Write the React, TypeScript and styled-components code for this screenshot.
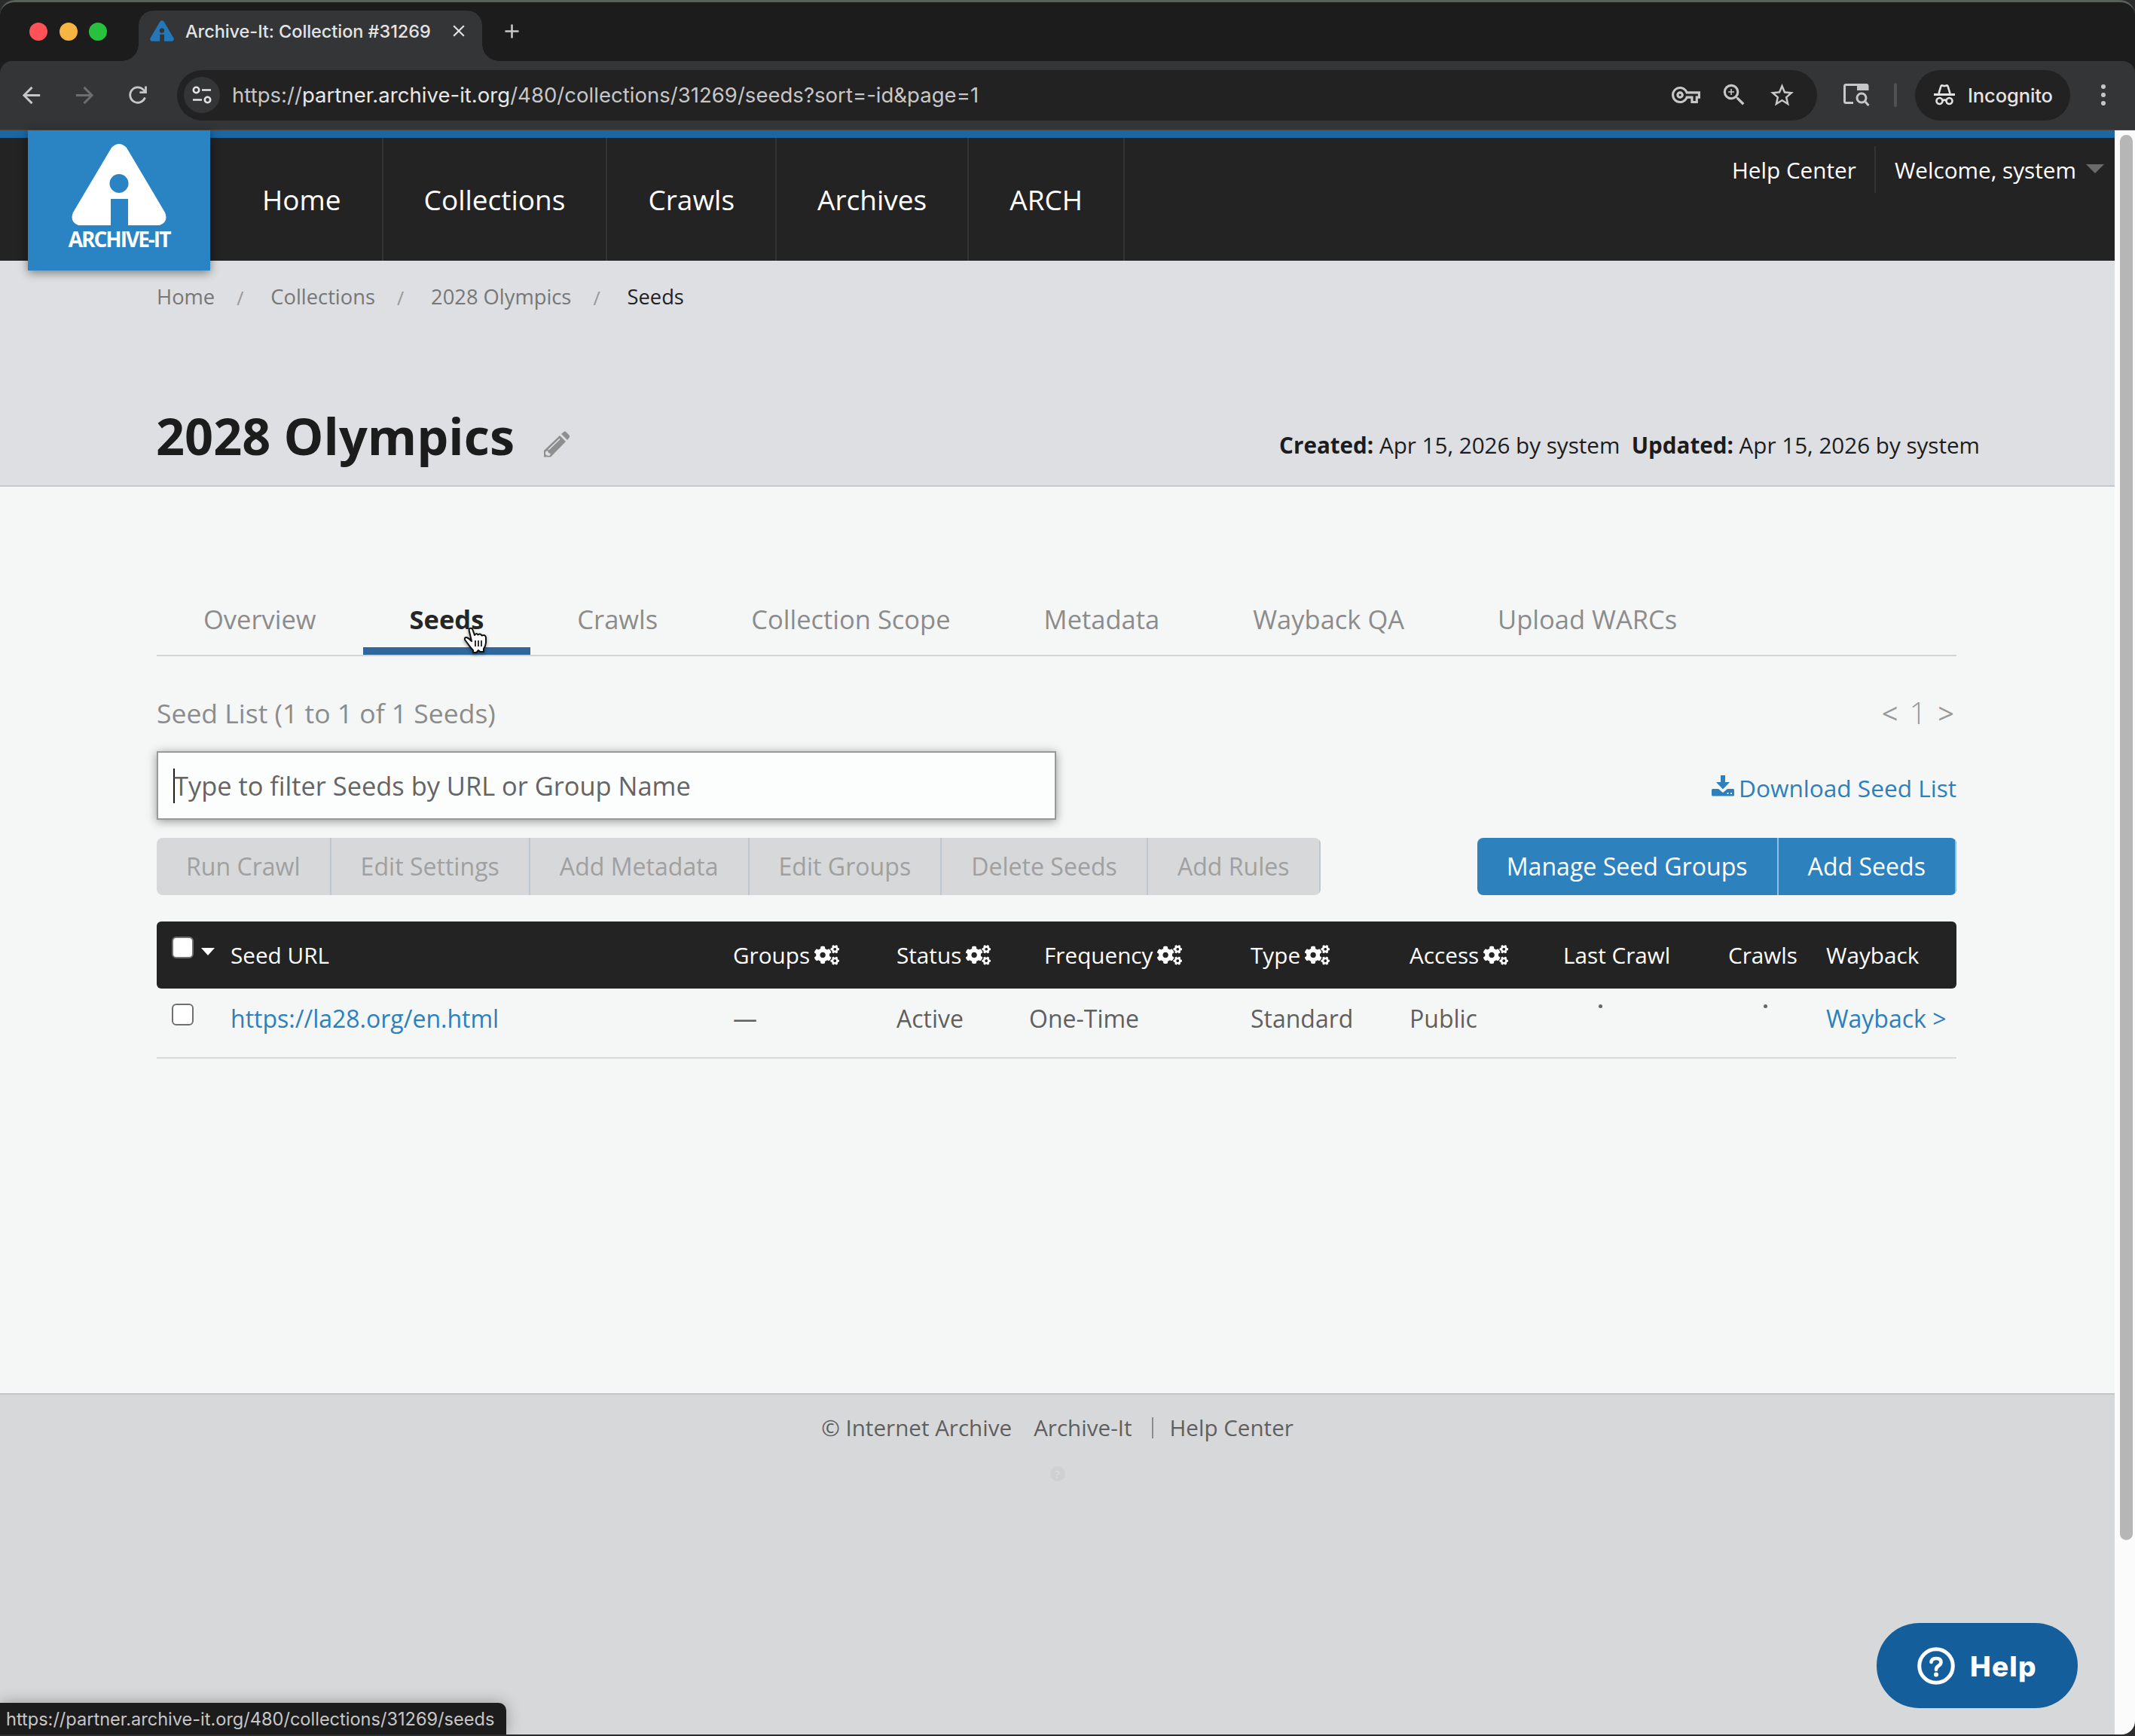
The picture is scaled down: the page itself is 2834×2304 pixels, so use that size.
import type { ReactNode } from 'react';
import styled, { createGlobalStyle } from 'styled-components';
import { FaCogs } from 'react-icons/fa';
import { MdArrowBack, MdArrowForward, MdClose, MdAdd, MdOutlineVpnKey, MdZoomIn, MdStarBorder } from 'react-icons/md';

const navItems = ['Home', 'Collections', 'Crawls', 'Archives', 'ARCH'];
const crumbs = ['Home', 'Collections', '2028 Olympics', 'Seeds'];
const tabs = ['Overview', 'Seeds', 'Crawls', 'Collection Scope', 'Metadata', 'Wayback QA', 'Upload WARCs'];
const bulkActions = ['Run Crawl', 'Edit Settings', 'Add Metadata', 'Edit Groups', 'Delete Seeds', 'Add Rules'];
const seedActions = ['Manage Seed Groups', 'Add Seeds'];

interface Column {
  label: string;
  gears?: boolean;
  indent?: number;
}

const columns: Column[] = [
  { label: 'Seed URL' },
  { label: 'Groups', gears: true },
  { label: 'Status', gears: true },
  { label: 'Frequency', gears: true, indent: 20 },
  { label: 'Type', gears: true },
  { label: 'Access', gears: true },
  { label: 'Last Crawl' },
  { label: 'Crawls' },
  { label: 'Wayback' },
];

const LogoMark = ({ color, width, height }: { color: string; width: number; height: number }) => (
  <svg width={width} height={height} viewBox="0 0 126 108">
    <path
      fill={color}
      fillRule="evenodd"
      d="M53 5Q63-5 73 5L124 91Q129 103 117 108H75V73H52V108H9Q-3 103 2 91ZM63 40A12.500 12.500 0 1 0 63 65A12.500 12.500 0 1 0 63 40Z"
    />
  </svg>
);

const ReloadIcon = () => (
  <svg width="26" height="26" viewBox="0 0 26 26" fill="none" stroke="#c7c7c7" strokeWidth="2.800">
    <path d="M22.500 16.500A10.200 10.200 0 1 1 20.600 6.300L23 9" />
    <path d="M23.500 1.500V9.600H15.400" />
  </svg>
);

const TuneIcon = () => (
  <svg width="26" height="24" viewBox="0 0 26 24" fill="none" stroke="#e3e3e3" strokeWidth="2.600">
    <circle cx="5.500" cy="5.500" r="3.700" />
    <path d="M13 5.500H25M1 18.500H13" />
    <circle cx="20.500" cy="18.500" r="3.700" />
  </svg>
);

const PanelSearchIcon = () => (
  <svg width="36" height="32" viewBox="0 0 36 32" fill="none" stroke="#c7c7c7" strokeWidth="3">
    <path d="M14 26.500H4.500Q2.500 26.500 2.500 24.500V4.500Q2.500 2.500 4.500 2.500H31.500Q33 2.500 33 4.500V10" />
    <path d="M19 2H34V10H19Z" fill="#c7c7c7" stroke="none" />
    <circle cx="25" cy="20" r="6" />
    <path d="M29.500 24.500L34.500 30" />
  </svg>
);

const IncognitoIcon = () => (
  <svg width="30" height="30" viewBox="0 0 30 30" fill="none" stroke="#e3e3e3" strokeWidth="2.600">
    <path d="M7.500 13L10.500 3.200Q11 2 12.300 2.400L15 3.200L17.700 2.400Q19 2 19.500 3.200L22.500 13" />
    <path d="M1 14.500H29" strokeWidth="3" />
    <circle cx="8.500" cy="23" r="4" />
    <circle cx="21.500" cy="23" r="4" />
    <path d="M12.500 22.500Q15 20.800 17.500 22.500" />
  </svg>
);

const PencilIcon = () => (
  <svg width="36" height="36" viewBox="0 0 36 36">
    <path fill="#8f8f8f" d="M1 26L22 6L30 14L10 34.500H1ZM24 4L27.500 1Q29 0 30.500 1.500L34.500 5.500Q36 7 34.500 9L32 12Z" />
    <path d="M7 25L22 10.500" stroke="#dddfe2" strokeWidth="1.600" />
    <path fill="#dddfe2" d="M3 27.500L6 26L7 29L10 30L8.500 33L5 32.500L3 31Z" />
  </svg>
);

const DownloadIcon = () => (
  <svg width="30" height="28" viewBox="0 0 30 28" fill="#2b80bd">
    <path d="M12 0H18V9H24L15 18.500L6 9H12Z" />
    <path fillRule="evenodd" d="M1.500 18H9L15 23L21 18H28.500Q30 18 30 19.500V26Q30 27.500 28.500 27.500H1.500Q0 27.500 0 26V19.500Q0 18 1.500 18ZM20.500 23V25H22.500V23ZM25 23V25H27V23Z" />
  </svg>
);

const HelpIcon = () => (
  <svg width="50" height="50" viewBox="0 0 50 50" fill="none" stroke="#fff" strokeLinecap="round">
    <circle cx="25" cy="25" r="22.300" strokeWidth="5" />
    <path d="M18.500 20Q19 15 25 15Q31.500 15 31.500 20Q31.500 23 28 25Q25 27 25 30" strokeWidth="4.600" />
    <circle cx="25" cy="36.500" r="3" fill="#fff" stroke="none" />
  </svg>
);

const HandCursor = () => (
  <svg width="34" height="36" viewBox="0 0 34 36">
    <path
      d="M7.500 4Q8.500 .800 11 2Q12 2.500 12.500 4L15 11Q17 7.500 19.500 10.500Q22.500 8 24.500 11.500Q29 9.500 30 14V21Q29.500 26 27 29V33H22.500L20 31L17.500 34H13V31Q9 27 6.500 23L2 17Q1.500 13.500 4.500 14Q7.500 15 11 19Z"
      fill="#fff"
      stroke="#111"
      strokeWidth="2"
      strokeLinejoin="round"
    />
    <path d="M16 18V26M20 18V26M24 18V26" stroke="#111" strokeWidth="1.700" />
  </svg>
);

const HeadCell = ({ column }: { column: Column }) => (
  <Cell $indent={column.indent}>
    {column.label}
    {column.gears && <FaCogs size={33} />}
  </Cell>
);

const Browser = ({ children }: { children: ReactNode }) => (
  <Window>
    <TabStrip>
      <Lights>
        <Light $color="#ff5257" />
        <Light $color="#f6b443" />
        <Light $color="#27c13e" />
      </Lights>
      <BrowserTab>
        <LogoMark color="#2477b8" width={32} height={28} />
        <TabTitle>Archive-It: Collection #31269</TabTitle>
        <MdClose size={26} />
      </BrowserTab>
      <NewTab>
        <MdAdd size={31} />
      </NewTab>
    </TabStrip>
    <Toolbar>
      <NavButtons>
        <MdArrowBack size={35} />
        <MdArrowForward size={35} color="#6d6e70" />
        <ReloadIcon />
      </NavButtons>
      <Omnibox>
        <SiteInfo>
          <TuneIcon />
        </SiteInfo>
        <Url>
          https://<b>partner.archive-it.org</b>/480/collections/31269/seeds?sort=-id&amp;page=1
        </Url>
        <OmniIcons>
          <MdOutlineVpnKey size={38} />
          <MdZoomIn size={38} />
          <MdStarBorder size={37} />
        </OmniIcons>
      </Omnibox>
      <PanelButton>
        <PanelSearchIcon />
      </PanelButton>
      <ToolbarDivider />
      <Incognito>
        <IncognitoIcon />
        Incognito
      </Incognito>
      <Dots>
        <i />
        <i />
        <i />
      </Dots>
    </Toolbar>
    {children}
  </Window>
);

const App = () => (
  <>
    <GlobalStyle />
    <Browser>
      <Viewport>
        <Page>
          <SiteHeader>
            <Logo>
              <LogoMark color="#fff" width={126} height={108} />
              <LogoText>ARCHIVE-IT</LogoText>
            </Logo>
            {navItems.map((item) => (
              <NavItem key={item}>{item}</NavItem>
            ))}
            <UserMenu>
              <UserLink>Help Center</UserLink>
              <UserLink>
                Welcome, system
                <Caret />
              </UserLink>
            </UserMenu>
          </SiteHeader>
          <TitleBand>
            <Breadcrumbs>
              {crumbs.map((crumb) => (
                <Crumb key={crumb}>{crumb}</Crumb>
              ))}
            </Breadcrumbs>
            <TitleRow>
              <Title>2028 Olympics</Title>
              <PencilIcon />
              <Dates>
                <b>Created:</b> Apr 15, 2026 by system&nbsp; <b>Updated:</b> Apr 15, 2026 by system
              </Dates>
            </TitleRow>
          </TitleBand>
          <Main>
            <Tabs>
              {tabs.map((tab) => (
                <Tab key={tab} $active={tab === 'Seeds'}>
                  {tab}
                  {tab === 'Seeds' && (
                    <Cursor>
                      <HandCursor />
                    </Cursor>
                  )}
                </Tab>
              ))}
            </Tabs>
            <ListHead>
              <span>Seed List (1 to 1 of 1 Seeds)</span>
              <Pager>
                <span>&lt;</span>
                <PageNumber>1</PageNumber>
                <span>&gt;</span>
              </Pager>
            </ListHead>
            <FilterRow>
              <FilterBox>
                <TextCaret />
                Type to filter Seeds by URL or Group Name
              </FilterBox>
              <Download>
                <DownloadIcon />
                Download Seed List
              </Download>
            </FilterRow>
            <ActionRow>
              <ButtonGroup>
                {bulkActions.map((action) => (
                  <Button key={action}>{action}</Button>
                ))}
              </ButtonGroup>
              <ButtonGroup>
                {seedActions.map((action) => (
                  <Button key={action} $primary>
                    {action}
                  </Button>
                ))}
              </ButtonGroup>
            </ActionRow>
            <HeadRow>
              <SelectCell>
                <Checkbox />
                <SelectCaret />
              </SelectCell>
              {columns.map((column) => (
                <HeadCell key={column.label} column={column} />
              ))}
            </HeadRow>
            <BodyRow>
              <SelectCell>
                <Checkbox />
              </SelectCell>
              <Cell $link>https://la28.org/en.html</Cell>
              <Cell>—</Cell>
              <Cell>Active</Cell>
              <Cell>One-Time</Cell>
              <Cell>Standard</Cell>
              <Cell>Public</Cell>
              <Cell>
                <Dot />
              </Cell>
              <Cell>
                <Dot />
              </Cell>
              <Cell $link>Wayback &gt;</Cell>
            </BodyRow>
          </Main>
          <Footer>
            <FooterLinks>
              <span>© Internet Archive</span>
              <span>Archive-It</span>
              <FooterDivider />
              <span>Help Center</span>
            </FooterLinks>
            <FooterBadge>?</FooterBadge>
          </Footer>
        </Page>
        <ScrollTrack>
          <ScrollThumb />
        </ScrollTrack>
      </Viewport>
      <HelpButton>
        <HelpIcon />
        Help
      </HelpButton>
      <StatusBar>https://partner.archive-it.org/480/collections/31269/seeds</StatusBar>
    </Browser>
  </>
);

export default App;

const GlobalStyle = createGlobalStyle`
  * {
    box-sizing: border-box;
  }

  body {
    margin: 0;
    background: #2b2b2b;
    font-family: 'Open Sans', sans-serif;
    color: #5b5b5b;
  }

  svg {
    display: block;
    flex: none;
  }
`;

const Window = styled.div`
  position: relative;
  display: flex;
  flex-direction: column;
  width: 2834px;
  height: 2302px;
  margin-bottom: 2px;
  border-top: 3px solid #59605a;
  border-radius: 20px 20px 18px 0;
  background: #1c1c1d;
  overflow: hidden;
  white-space: nowrap;
`;

const TabStrip = styled.div`
  display: flex;
  height: 78px;
  padding-top: 11px;
  font-family: Inter, sans-serif;
`;

const Lights = styled.div`
  display: flex;
  gap: 15.500px;
  width: 184px;
  padding: 16px 0 0 39px;
`;

const Light = styled.span<{ $color: string }>`
  width: 24px;
  height: 24px;
  border-radius: 50%;
  background: ${({ $color }) => $color};
`;

const BrowserTab = styled.div`
  position: relative;
  display: flex;
  align-items: center;
  width: 456px;
  height: 67px;
  padding: 0 18px 13px 15px;
  border-radius: 20px 20px 0 0;
  background: #343537;
  color: #e3e3e3;

  /* flared feet of the active tab */
  &::before,
  &::after {
    content: '';
    position: absolute;
    bottom: 0;
    width: 22px;
    height: 22px;
  }

  &::before {
    left: -22px;
    background: radial-gradient(circle at 0 0, transparent 21.500px, #343537 22px);
  }

  &::after {
    right: -22px;
    background: radial-gradient(circle at 100% 0, transparent 21.500px, #343537 22px);
  }
`;

const TabTitle = styled.span`
  flex: 1;
  margin-left: 15px;
  font-size: 23.500px;
  font-weight: 500;
  letter-spacing: -0.06px;
`;

const NewTab = styled.div`
  padding: 12px 0 0 24px;
  color: #c7c7c7;
`;

const Toolbar = styled.div`
  display: flex;
  align-items: center;
  height: 92px;
  padding-bottom: 1px;
  border-bottom: 1px solid #46474a;
  border-radius: 16px 16px 0 0;
  background: #343537;
  color: #c7c7c7;
  font-family: Inter, sans-serif;
`;

const NavButtons = styled.div`
  display: flex;
  align-items: center;
  gap: 35.500px;
  width: 235px;
  padding-left: 24px;

  svg:last-child {
    margin-left: 5px;
  }
`;

const Omnibox = styled.div`
  display: flex;
  align-items: center;
  width: 2177px;
  height: 67px;
  padding: 0 28px 0 9px;
  border-radius: 34px;
  background: #222223;
`;

const SiteInfo = styled.span`
  display: flex;
  align-items: center;
  justify-content: center;
  width: 48px;
  height: 48px;
  border-radius: 50%;
  background: #343537;
`;

const Url = styled.span`
  flex: 1;
  margin-left: 16px;
  font-size: 27.500px;
  letter-spacing: 0.03px;

  b {
    color: #e8e8e8;
    font-weight: 400;
  }
`;

const OmniIcons = styled.span`
  display: flex;
  align-items: center;
  gap: 26px;
`;

const PanelButton = styled.span`
  margin-left: 34px;
`;

const ToolbarDivider = styled.span`
  width: 4px;
  height: 32px;
  margin: 0 24px 0 32px;
  border-radius: 2px;
  background: #505153;
`;

const Incognito = styled.div`
  display: flex;
  align-items: center;
  gap: 16px;
  width: 206px;
  height: 67px;
  padding-left: 24px;
  border-radius: 34px;
  background: #222223;
  color: #e3e3e3;
  font-size: 25.500px;
  font-weight: 500;
  letter-spacing: -0.1px;
`;

const Dots = styled.div`
  display: flex;
  flex-direction: column;
  gap: 5px;
  margin-left: 41px;

  i {
    width: 6px;
    height: 6px;
    border-radius: 50%;
    background: #c7c7c7;
  }
`;

const Viewport = styled.div`
  display: flex;
  flex: 1;
  min-height: 0;
`;

const Page = styled.div`
  display: flex;
  flex-direction: column;
  width: 2807px;
  background: #f5f7f7;
`;

const SiteHeader = styled.header`
  display: flex;
  height: 173px;
  padding-left: 37px;
  border-top: 10px solid #1e669f;
  background: #232324;
  color: #fff;
`;

const Logo = styled.div`
  z-index: 1;
  display: flex;
  flex-direction: column;
  align-items: center;
  width: 242px;
  height: 186px;
  margin: -10px 15px 0 0;
  padding-top: 18px;
  background: #2a84c4;
  box-shadow: 0 3px 12px rgba(0, 0, 0, 0.45);
`;

const LogoText = styled.span`
  margin-top: 2px;
  font-size: 28px;
  font-weight: 700;
  line-height: 32px;
  letter-spacing: -2px;
`;

const NavItem = styled.a`
  padding: 0 54px;
  border-right: 2px solid #333335;
  font-size: 37px;
  line-height: 163px;
`;

const UserMenu = styled.div`
  display: flex;
  align-items: flex-start;
  margin: 11px 14px 0 auto;
`;

const UserLink = styled.a`
  display: flex;
  align-items: center;
  height: 62px;
  padding-left: 25px;
  font-size: 29.700px;

  &:first-child {
    padding-right: 24px;
    border-right: 2px solid #333335;
  }
`;

const Caret = styled.span`
  margin: -3px 0 0 13px;
  border: 12px solid transparent;
  border-top-color: #6b6b6b;
  border-bottom: 0;
`;

const TitleBand = styled.section`
  height: 300px;
  padding: 26px 179px 0 208px;
  border-bottom: 2px solid #c3c9ce;
  background: #dddfe2;
`;

const Breadcrumbs = styled.nav`
  display: flex;
  font-size: 27.300px;
  line-height: 44px;
`;

const Crumb = styled.a`
  color: #777;

  & + &::before {
    content: '/';
    margin: 0 36px 0 29px;
    color: #999;
    font-size: 25px;
    vertical-align: -1px;
  }

  &:last-child {
    color: #222;
  }
`;

const TitleRow = styled.div`
  display: flex;
  align-items: center;
  height: 100px;
  margin-top: 115px;
`;

const Title = styled.h1`
  margin: 0 38px 0 -1px;
  padding-bottom: 8px;
  color: #1c1c1d;
  font-size: 66.600px;
  font-weight: 700;

  & + svg {
    margin-top: 15px;
  }
`;

const Dates = styled.p`
  margin: 16px 0 0 auto;
  color: #1c1c1d;
  font-size: 29.600px;
`;

const Main = styled.main`
  height: 1203px;
  padding: 133px 210px 0 208px;
`;

const Tabs = styled.nav`
  display: flex;
  height: 92px;
  border-bottom: 2px solid #d3d5d5;
`;

const Tab = styled.a<{ $active: boolean }>`
  position: relative;
  padding: 0 62px;
  border-bottom: 10px solid ${({ $active }) => ($active ? '#2f669c' : 'transparent')};
  color: ${({ $active }) => ($active ? '#262626' : '#8c8c8c')};
  font-size: 34.500px;
  font-weight: ${({ $active }) => ($active ? 700 : 400)};
  line-height: 85px;
`;

const Cursor = styled.span`
  position: absolute;
  top: 53px;
  left: 133px;
  line-height: 0;
  filter: drop-shadow(0 2px 2px rgba(0, 0, 0, 0.4));
`;

const ListHead = styled.div`
  display: flex;
  align-items: center;
  justify-content: space-between;
  height: 92px;
  margin-top: 29px;
  padding-bottom: 1px;
  color: #8c8c8c;
  font-size: 35.500px;
`;

const Pager = styled.span`
  display: flex;
  align-items: center;
  gap: 15px;
  padding-right: 3px;
  color: #999;
  font-size: 38px;
`;

const PageNumber = styled.span`
  font-size: 40px;
  font-weight: 300;
`;

const FilterRow = styled.div`
  display: flex;
  align-items: center;
  justify-content: space-between;
  height: 91px;
  margin-top: 5px;
`;

const FilterBox = styled.div`
  display: flex;
  align-items: center;
  width: 1194px;
  height: 91px;
  padding: 0 20px;
  border: 2px solid #999;
  background: #fcfdfd;
  box-shadow: 0 2px 12px rgba(0, 0, 0, 0.4);
  color: #646464;
  font-size: 34.400px;
`;

const TextCaret = styled.span`
  width: 2px;
  height: 46px;
  margin-right: -1px;
  background: #1c1c1d;
`;

const Download = styled.a`
  display: flex;
  align-items: center;
  gap: 6px;
  padding-top: 6px;
  color: #2b80bd;
  font-size: 31.600px;

  svg {
    margin-top: -5px;
  }
`;

const ActionRow = styled.div`
  display: flex;
  justify-content: space-between;
  margin-top: 24px;
`;

const ButtonGroup = styled.div`
  display: flex;
  border-radius: 8px;
  overflow: hidden;
`;

const Button = styled.button<{ $primary?: boolean }>`
  height: 76px;
  padding: 0 39px 1px;
  border: 0;
  border-right: 2px solid ${({ $primary }) => ($primary ? '#8fc2e6' : '#bfc7cf')};
  background: ${({ $primary }) => ($primary ? '#2d82be' : '#d7d8da')};
  color: ${({ $primary }) => ($primary ? '#fff' : '#a0a0a0')};
  font-family: inherit;
  font-size: 32.100px;
`;

const TableRow = styled.div`
  display: grid;
  grid-template-columns: 98px 667px 217px 176px 294px 211px 204px 219px 130px 1fr;
`;

const HeadRow = styled(TableRow)`
  height: 89px;
  margin-top: 35px;
  border-radius: 6px;
  background: #232324;
  color: #fff;
  font-size: 29.700px;
  line-height: 89px;
`;

const BodyRow = styled(TableRow)`
  height: 93px;
  border-bottom: 2px solid #d8dadd;
  color: #5f5f5f;
  font-size: 32px;
  line-height: 79px;
`;

const Cell = styled.div<{ $indent?: number; $link?: boolean }>`
  display: flex;
  align-items: center;
  gap: 6px;
  padding-left: ${({ $indent = 0 }) => $indent}px;
  color: ${({ $link }) => ($link ? '#2b80bd' : 'inherit')};

  ${BodyRow} & {
    align-items: flex-start;
  }
`;

const SelectCell = styled.div`
  display: flex;
  align-items: flex-start;
  gap: 10px;
  padding: 20px 0 0 20px;
`;

const Checkbox = styled.span`
  width: 29px;
  height: 29px;
  border: 2px solid #707070;
  border-radius: 6px;
  background: #fff;
`;

const SelectCaret = styled.span`
  margin-top: 15px;
  border: 9px solid transparent;
  border-top: 10px solid #fff;
  border-bottom: 0;
`;

const Dot = styled.span`
  width: 5px;
  height: 5px;
  margin: 21px 0 0 47px;
  border-radius: 50%;
  background: #666;
`;

const Footer = styled.footer`
  flex: 1;
  border-top: 2px solid #c3c5c7;
  background: #d7d8da;
  color: #5f5f5f;
  font-size: 29.600px;
`;

const FooterLinks = styled.div`
  display: flex;
  align-items: center;
  justify-content: center;
  gap: 29px;
  padding-top: 23px;

  span:last-child {
    margin-left: -8px;
  }
`;

const FooterDivider = styled.i`
  width: 2px;
  height: 28px;
  margin-left: -2px;
  background: #8c8c8c;
`;

const FooterBadge = styled.div`
  width: 20px;
  height: 20px;
  margin: 31px auto 0;
  border-radius: 50%;
  background: #cfd0d1;
  color: #d9dbdd;
  font-size: 15px;
  font-weight: 700;
  line-height: 20px;
  text-align: center;
`;

const ScrollTrack = styled.div`
  width: 27px;
  padding: 6px 3px 0 7px;
  background: #fbfbfb;
`;

const ScrollThumb = styled.div`
  height: 1865px;
  border-radius: 9px;
  background: #b6b6b6;
`;

const HelpButton = styled.button`
  position: absolute;
  right: 76px;
  bottom: 35px;
  display: flex;
  align-items: center;
  gap: 20px;
  width: 267px;
  height: 113px;
  padding: 1px 0 0 54px;
  border: 0;
  border-radius: 57px;
  background: #155e9c;
  color: #fff;
  font-family: Inter, sans-serif;
  font-size: 37px;
  font-weight: 800;
  letter-spacing: 1.2px;
`;

const StatusBar = styled.div`
  position: absolute;
  bottom: 0;
  left: 0;
  width: 672px;
  height: 42px;
  padding-left: 8px;
  border-radius: 0 10px 0 0;
  background: #1c1c1d;
  box-shadow: 0 0 20px rgba(0, 0, 0, 0.3);
  color: #c7c7c7;
  font-family: Inter, sans-serif;
  font-size: 23.550px;
  line-height: 43px;
`;
